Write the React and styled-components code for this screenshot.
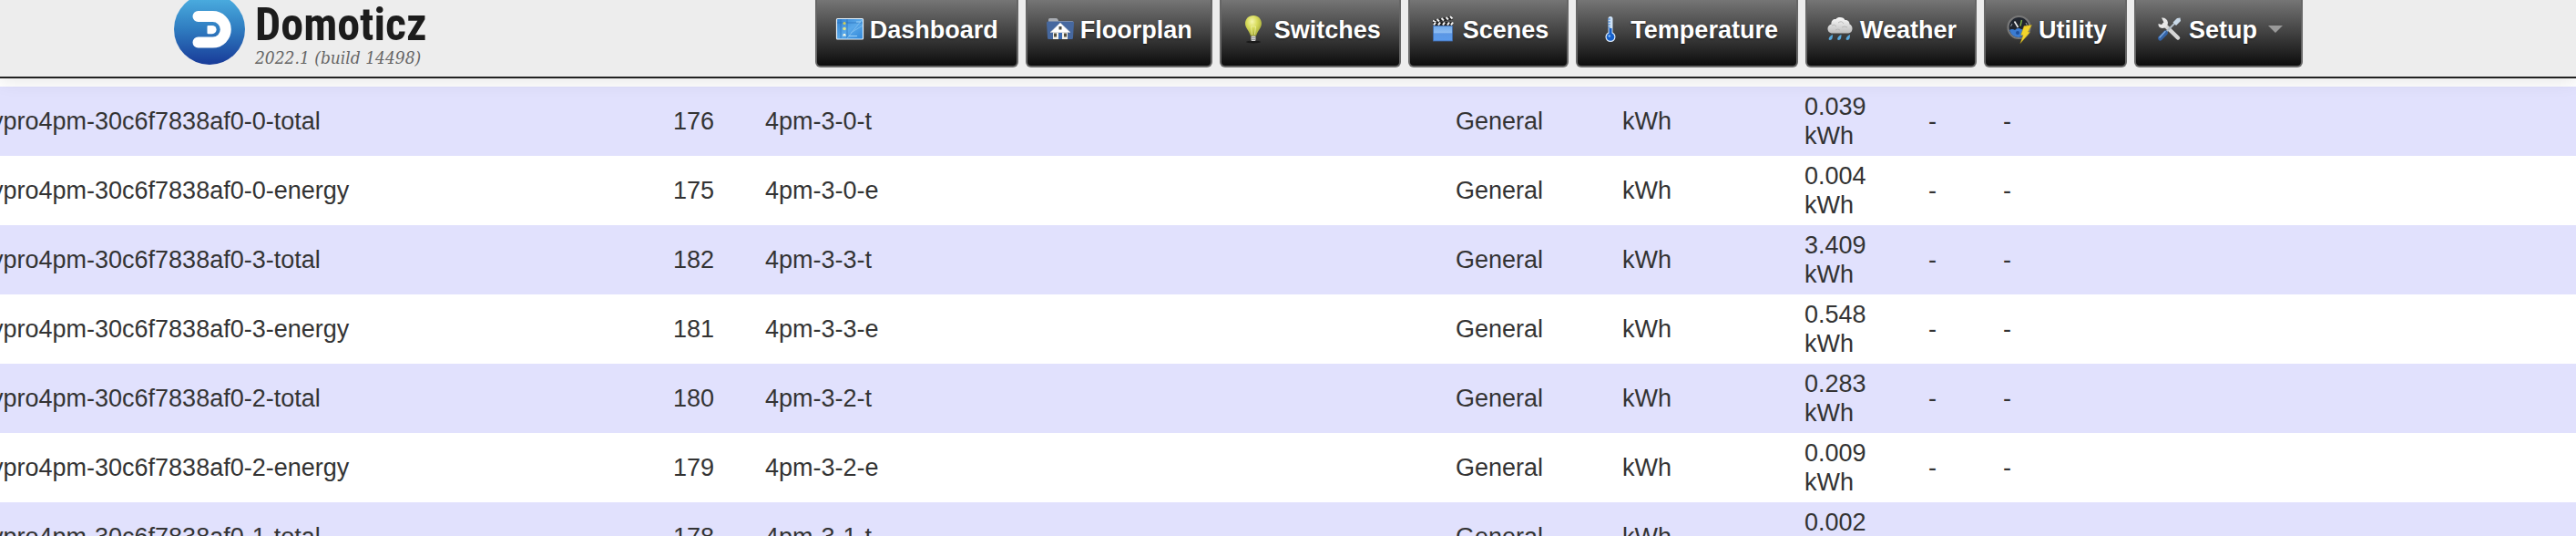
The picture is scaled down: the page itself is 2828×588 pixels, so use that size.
import React from 'react';
import styled, { createGlobalStyle } from 'styled-components';

const GlobalStyle = createGlobalStyle`
  * {
    box-sizing: border-box;
  }
  body {
    margin: 0;
    background: #fff;
    color: #333;
    font-family: Arial, 'Liberation Sans', sans-serif;
    font-size: 27px;
    line-height: 32px;
  }
`;

const Page = styled.div`
  height: 100vh;
  overflow: hidden;
`;

const Header = styled.header`
  position: relative;
  z-index: 1;
  display: flex;
  justify-content: space-between;
  align-items: flex-start;
  padding: 0 300px 10px 190px;
  background: #ededed;
  border-bottom: 2px solid #222;
  box-shadow: 0 1px 20px rgba(0, 0, 0, 0.12);
`;

const Brand = styled.a`
  display: flex;
  gap: 10px;
  text-decoration: none;
`;

const BrandText = styled.div`
  display: flex;
  flex-direction: column;
  white-space: nowrap;
`;

const BrandName = styled.span`
  color: #1c1c1c;
  font-family: 'Roboto Condensed', 'Open Sans Condensed', 'Liberation Sans Narrow', 'Liberation Sans', sans-serif;
  font-size: 50px;
  font-weight: 700;
  line-height: 54px;
`;

const Version = styled.span`
  color: #666;
  font-family: 'DejaVu Serif Condensed', 'DejaVu Serif', serif;
  font-size: 19px;
  font-style: italic;
  line-height: 18px;
`;

const NavList = styled.ul`
  display: flex;
  gap: 8px;
  margin: 0;
  padding: 0;
  list-style: none;
`;

const NavLink = styled.a`
  display: flex;
  align-items: flex-start;
  gap: 6px;
  padding: 16px 20px 22px 20px;
  border: 2px solid #666;
  border-top: 0;
  border-radius: 0 0 6px 6px;
  background: linear-gradient(#757575, #0d0d0d);
  color: #fff;
  font-weight: 700;
  line-height: 34px;
  text-decoration: none;
  text-shadow: 0 1px 2px rgba(0, 0, 0, 0.6);
`;

const Icon = styled.svg`
  width: 32px;
  height: 32px;
  flex: none;
`;

const Caret = styled.span`
  margin: 12px 0 0 6px;
  border: 8px solid transparent;
  border-top-color: #999;
  border-bottom: 0;
`;

const Table = styled.table`
  width: calc(100% + 10px);
  margin: 9px 0 0 -10px;
  border-collapse: collapse;
  table-layout: fixed;
`;

const Col = styled.col`
  width: ${(props) => (props.$w ? props.$w + 'px' : 'auto')};
`;

const Row = styled.tr`
  &:nth-child(odd) {
    background: #e1e1fd;
  }
`;

const Cell = styled.td`
  padding: 6px 24px 6px 0;
  vertical-align: middle;
`;

const Logo = () => (
  <svg width="80" height="72" viewBox="0 0 80 72">
    <defs>
      <linearGradient id="disc" x1="0" y1="0" x2="0" y2="1">
        <stop offset="0" stopColor="#4fb4e4" />
        <stop offset="0.5" stopColor="#2f7cc0" />
        <stop offset="1" stopColor="#183a98" />
      </linearGradient>
    </defs>
    <circle cx="40" cy="32" r="39" fill="url(#disc)" />
    <path d="M27.5 18H43.5A14.3 14.3 0 0 1 43.5 46.6H27.5" fill="none" stroke="#fff" strokeWidth="12" strokeLinecap="round" />
    <path d="M38.5 28H43a4.6 4.6 0 0 1 0 9.2H38.5a1 1 0 0 1-1-1V29a1 1 0 0 1 1-1Z" fill="#fff" />
  </svg>
);

const DashboardIcon = () => (
  <Icon viewBox="0 0 32 32">
    <defs>
      <linearGradient id="board" x1="0" y1="0" x2="1" y2="1">
        <stop offset="0" stopColor="#2f7fd0" />
        <stop offset="0.5" stopColor="#5aa9ea" />
        <stop offset="1" stopColor="#2f86d8" />
      </linearGradient>
    </defs>
    <rect x="1.5" y="4.5" width="29" height="22.5" rx="1" fill="url(#board)" stroke="#e4f1fb" strokeWidth="1.2" />
    <path d="M6 5v21M13 5v21M2 9h28" stroke="#2468b4" strokeWidth="0.6" />
    <path d="M13 26L29 6M17 20L30 12" stroke="#8cc8f5" strokeWidth="1" opacity="0.7" />
    <circle cx="10" cy="9.5" r="1.6" fill="#d2cf58" />
    <circle cx="10" cy="15.5" r="1.8" fill="#dfe38a" />
    <path d="M8 23.5l1-2.5h2l1 2.5z" fill="#f2f6e4" />
    <path d="M15 23.5h9M23 8h5" stroke="#9ad0f7" strokeWidth="1" />
  </Icon>
);

const FloorplanIcon = () => (
  <Icon viewBox="0 0 32 32">
    <path d="M3 10V5.5Q3 4 4.5 4H11.5Q13 4 13.5 5.5L14 7H29Q30.5 7 30.5 8.5V10Z" fill="#a9adb3" />
    <path d="M1 9Q1 7.5 2.5 7.5H29.5Q31 7.5 31 9L30 25.5Q30 27 28.5 27H3.5Q2 27 2 25.5Z" fill="#46689f" />
    <path d="M8 18H24V27H8Z" fill="#f4f2ea" />
    <path d="M16 9L27 19.5H5Z" fill="#fff" stroke="#c5c9cf" strokeWidth="0.6" />
    <rect x="14.5" y="13" width="3" height="3.5" fill="#4d4d45" />
    <rect x="9" y="20.5" width="3" height="4" fill="#55503f" />
    <rect x="20" y="20.5" width="3" height="4" fill="#55503f" />
    <rect x="14" y="20" width="4" height="7" fill="#3c6cb4" />
  </Icon>
);

const SwitchesIcon = () => (
  <Icon viewBox="0 0 32 32">
    <defs>
      <radialGradient id="bulb" cx="0.42" cy="0.3" r="0.7">
        <stop offset="0" stopColor="#f6f6ae" />
        <stop offset="0.45" stopColor="#d8dc5c" />
        <stop offset="1" stopColor="#a2a638" />
      </radialGradient>
    </defs>
    <ellipse cx="15" cy="30" rx="8" ry="1.5" fill="#111" opacity="0.7" />
    <path d="M15 1C9.5 1 6 5 6 9.800C6 14.5 10 17 12 23.5H18C20 17 24 14.5 24 9.800C24 5 20.5 1 15 1Z" fill="url(#bulb)" />
    <path d="M13.5 22L12.5 13H17.5L16.5 22" fill="none" stroke="#eef0a0" strokeWidth="0.8" />
    <rect x="12.5" y="23.5" width="5" height="5.5" rx="1" fill="#d9d9d9" />
    <path d="M12.5 25.5H17.5M12.5 27.5H17.5" stroke="#777" strokeWidth="0.7" />
  </Icon>
);

const ScenesIcon = () => (
  <Icon viewBox="-1 0 32 32">
    <defs>
      <linearGradient id="clap" x1="0" y1="0" x2="0" y2="1">
        <stop offset="0" stopColor="#6fa9ea" />
        <stop offset="0.45" stopColor="#8fbdf2" />
        <stop offset="0.5" stopColor="#5c97e4" />
        <stop offset="1" stopColor="#5b9bec" />
      </linearGradient>
    </defs>
    <path d="M3 6.5L25 1.5L26 5.5L4 9Z" fill="#222" />
    <path d="M4 6.5l3.5 2M8.5 5l2.5 2.5M13.5 4l2.5 2.5M18.5 3l2.5 2.5M23 2l2.5 2.5" stroke="#f2f2f2" strokeWidth="2" />
    <rect x="4" y="8" width="22" height="4" fill="#222" />
    <path d="M5 11.5l2-3M10 11.5l2-3M15 11.5l2-3M20 11.5l2-3M24 11.5l2-3" stroke="#f2f2f2" strokeWidth="2.2" />
    <rect x="4.5" y="12.5" width="21" height="16.5" fill="url(#clap)" stroke="#3f6db0" strokeWidth="0.8" />
  </Icon>
);

const TemperatureIcon = () => (
  <Icon viewBox="-1 0 32 32">
    <rect x="12.5" y="2" width="5" height="20" rx="2.5" fill="#cfe3f8" />
    <path d="M12 5h3M12 8h3M12 11h3M12 14h3" stroke="#3d7ccc" strokeWidth="1.2" />
    <circle cx="15" cy="24.5" r="5.5" fill="#dcebfa" />
    <circle cx="15" cy="24.5" r="4.3" fill="#1560cc" />
    <rect x="13.5" y="15" width="3" height="8" fill="#1560cc" />
    <circle cx="13.8" cy="23.5" r="1.3" fill="#8ec0f5" />
  </Icon>
);

const WeatherIcon = () => (
  <Icon viewBox="0 0 32 32">
    <defs>
      <linearGradient id="cloud" x1="0" y1="0" x2="0" y2="1">
        <stop offset="0" stopColor="#fafafa" />
        <stop offset="1" stopColor="#bcbcbc" />
      </linearGradient>
    </defs>
    <path d="M8 20.5C4 20.5 2.5 18 2.5 15.5C2.5 12.5 5 11 6.5 10.5C6 6.5 9 4.5 11.5 5C12.5 3.5 14 3 16 3C19 3 20.5 4 21.5 6C25 6 26.5 8 26.5 10.5C28.5 11.5 29.5 13 29.5 15.5C29.5 18.5 27.5 20.5 24 20.5Z" fill="url(#cloud)" />
    <path d="M7 12q3-2 5 1M14 9q4-3 6 1M18 14q3-2 6 0M11 17q3-2 5 0" fill="none" stroke="#b0b0b0" strokeWidth="0.8" />
    <path d="M8 22C8 25 7.5 28 5 28C2.5 28 3.5 24 8 22ZM17.5 22C17.5 25 17 28 14.5 28C12 28 13 24 17.5 22ZM27 22C27 25 26.5 28 24 28C21.5 28 22.5 24 27 22Z" fill="#58a8dc" />
  </Icon>
);

const UtilityIcon = () => (
  <Icon viewBox="0 0 32 32">
    <circle cx="16.5" cy="14" r="12" fill="#20252e" stroke="#787878" strokeWidth="2.2" />
    <path d="M6 17Q9 15 12 17Q15 13.5 19 16L26 18Q22 25 16 25Q9 25 6 17Z" fill="#3b7cd2" />
    <circle cx="15" cy="20" r="2" fill="#1d4f9c" />
    <path d="M15.5 14L11.5 7.5" stroke="#f2f2f2" strokeWidth="1.6" />
    <path d="M18 12.5L19.500 6" stroke="#7fb344" strokeWidth="1.4" />
    <path d="M7.5 13l1.5-3M24 9l1.5 3" stroke="#9aa3ad" strokeWidth="1" />
    <path d="M22 12.5L30.500 11.5L26.5 19L28.5 19.500L18 31.5L21 22.5H18.500Z" fill="#f1d42c" stroke="#a8901c" strokeWidth="0.5" />
  </Icon>
);

const SetupIcon = () => (
  <Icon viewBox="0 0 32 32">
    <path d="M11 11L26 25.5" stroke="#d6d6d6" strokeWidth="4.500" strokeLinecap="round" />
    <path d="M8 3.5Q14 3 15 9Q14.500 14.500 9 15Q4 14.500 4.500 10L8 11L10.5 8.5Z" fill="#e8e8e8" />
    <path d="M24 8L13.5 18.5" stroke="#b4c0cc" strokeWidth="2" />
    <path d="M20.5 8.5L25 4L28.5 3.5L29 7L24 12Z" fill="#c9d9e8" />
    <path d="M6.500 26L12.500 20" stroke="#3464a8" strokeWidth="5" strokeLinecap="round" />
    <path d="M6 25L12 18.5" stroke="#7ba7dd" strokeWidth="1.5" strokeLinecap="round" />
  </Icon>
);

const menu = [
  { label: 'Dashboard', icon: DashboardIcon },
  { label: 'Floorplan', icon: FloorplanIcon },
  { label: 'Switches', icon: SwitchesIcon },
  { label: 'Scenes', icon: ScenesIcon },
  { label: 'Temperature', icon: TemperatureIcon },
  { label: 'Weather', icon: WeatherIcon },
  { label: 'Utility', icon: UtilityIcon },
  { label: 'Setup', icon: SetupIcon, dropdown: true },
];

const columns = [749, 101, 758, 183, 200, 136, 82, null];

const devices = [
  { id: 'ypro4pm-30c6f7838af0-0-total', idx: 176, name: '4pm-3-0-t', data: '0.039 kWh' },
  { id: 'ypro4pm-30c6f7838af0-0-energy', idx: 175, name: '4pm-3-0-e', data: '0.004 kWh' },
  { id: 'ypro4pm-30c6f7838af0-3-total', idx: 182, name: '4pm-3-3-t', data: '3.409 kWh' },
  { id: 'ypro4pm-30c6f7838af0-3-energy', idx: 181, name: '4pm-3-3-e', data: '0.548 kWh' },
  { id: 'ypro4pm-30c6f7838af0-2-total', idx: 180, name: '4pm-3-2-t', data: '0.283 kWh' },
  { id: 'ypro4pm-30c6f7838af0-2-energy', idx: 179, name: '4pm-3-2-e', data: '0.009 kWh' },
  { id: 'ypro4pm-30c6f7838af0-1-total', idx: 178, name: '4pm-3-1-t', data: '0.002 kWh' },
];

const App = () => {
  return (
    <Page>
      <GlobalStyle />
      <Header>
        <Brand href="#">
          <Logo />
          <BrandText>
            <BrandName>Domoticz</BrandName>
            <Version>2022.1 (build 14498)</Version>
          </BrandText>
        </Brand>
        <nav>
          <NavList>
            {menu.map(({ label, icon: MenuIcon, dropdown }) => (
              <li key={label}>
                <NavLink href={'#' + label}>
                  <MenuIcon />
                  {label}
                  {dropdown && <Caret />}
                </NavLink>
              </li>
            ))}
          </NavList>
        </nav>
      </Header>
      <Table>
        <colgroup>
          {columns.map((w, i) => <Col key={i} $w={w} />)}
        </colgroup>
        <tbody>
          {devices.map((device) => (
            <Row key={device.idx}>
              <Cell>{device.id}</Cell>
              <Cell>{device.idx}</Cell>
              <Cell>{device.name}</Cell>
              <Cell>General</Cell>
              <Cell>kWh</Cell>
              <Cell>{device.data}</Cell>
              <Cell>-</Cell>
              <Cell>-</Cell>
            </Row>
          ))}
        </tbody>
      </Table>
    </Page>
  );
};

export default App;
